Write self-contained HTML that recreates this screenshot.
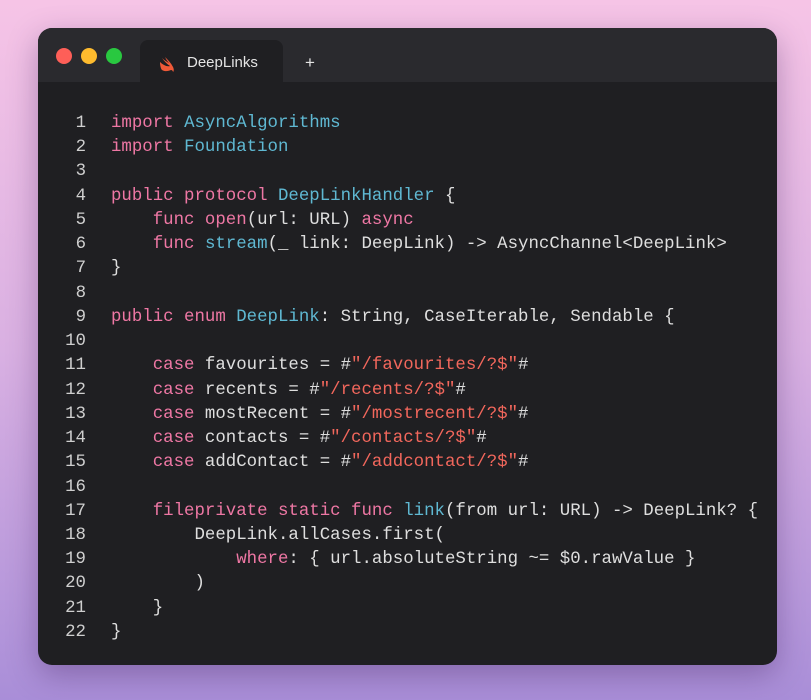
<!DOCTYPE html>
<html><head><style>
body{margin:0;width:811px;height:700px;overflow:hidden;background:linear-gradient(180deg,#f6c4e6 0%,#d9b0e2 50%,#a98ed8 100%);font-family:"Liberation Sans",sans-serif}
.win{position:absolute;left:38px;top:28px;width:739px;height:637px;border-radius:14px;background:#1f1f22;overflow:hidden;box-shadow:0 10px 30px rgba(60,30,90,.35)}
.bar{position:absolute;left:0;top:0;width:100%;height:54px;background:#2a2a2e}
.dot{position:absolute;top:20px;width:16px;height:16px;border-radius:50%}
.tab{position:absolute;left:102px;top:12px;width:143px;height:42px;background:#1f1f22;border-radius:8px 8px 0 0;color:#e4e4e4;font-size:15px}
.code{position:absolute;left:0;top:84px;font-family:"Liberation Mono",monospace;font-size:17.4px;line-height:24.24px;color:#dedede;white-space:pre}
.ln{position:absolute;left:22px;width:26px;text-align:right;color:#cfcfcf}
.tx{position:absolute;left:73px}
.k{color:#ee77a4}.t{color:#5fb8d2}.s{color:#f2675c}
</style></head><body>
<div class="win">
<div class="bar"></div>
<div class="dot" style="left:18px;background:#fe5f58"></div>
<div class="dot" style="left:43px;background:#febb2e"></div>
<div class="dot" style="left:68px;background:#29c840"></div>
<div class="tab"><svg style="position:absolute;left:19px;top:16px" width="18" height="16" viewBox="0 0 18 16"><path d="M1 6c3 3 7 5 10 4-3-2-6-5-8-8 2 2 5 4 7 5-2-2-3-4-4-6 3 3 6 6 8 10 1 2 1 4 0 5 0-1-1-2-2-2-2 1-6 2-9 0C2 13 1 10 1 6z" fill="#f05a38"/></svg><span style="position:absolute;left:47px;top:14px">DeepLinks</span></div>
<div style="position:absolute;left:267px;top:25px;color:#e4e4e4;font-size:17px">+</div>
<div class="code">
<div class="ln" style="top:0">1
2
3
4
5
6
7
8
9
10
11
12
13
14
15
16
17
18
19
20
21
22</div>
<div class="tx" style="top:0"><span class="k">import</span> <span class="t">AsyncAlgorithms</span>
<span class="k">import</span> <span class="t">Foundation</span>

<span class="k">public protocol</span> <span class="t">DeepLinkHandler</span> {
    <span class="k">func open</span>(url: URL) <span class="k">async</span>
    <span class="k">func</span> <span class="t">stream</span>(_ link: DeepLink) -&gt; AsyncChannel&lt;DeepLink&gt;
}

<span class="k">public enum</span> <span class="t">DeepLink</span>: String, CaseIterable, Sendable {

    <span class="k">case</span> favourites = #<span class="s">"/favourites/?$"</span>#
    <span class="k">case</span> recents = #<span class="s">"/recents/?$"</span>#
    <span class="k">case</span> mostRecent = #<span class="s">"/mostrecent/?$"</span>#
    <span class="k">case</span> contacts = #<span class="s">"/contacts/?$"</span>#
    <span class="k">case</span> addContact = #<span class="s">"/addcontact/?$"</span>#

    <span class="k">fileprivate static func</span> <span class="t">link</span>(from url: URL) -&gt; DeepLink? {
        DeepLink.allCases.first(
            <span class="k">where</span>: { url.absoluteString ~= $0.rawValue }
        )
    }
}</div>
</div>
</div>
</body></html>
